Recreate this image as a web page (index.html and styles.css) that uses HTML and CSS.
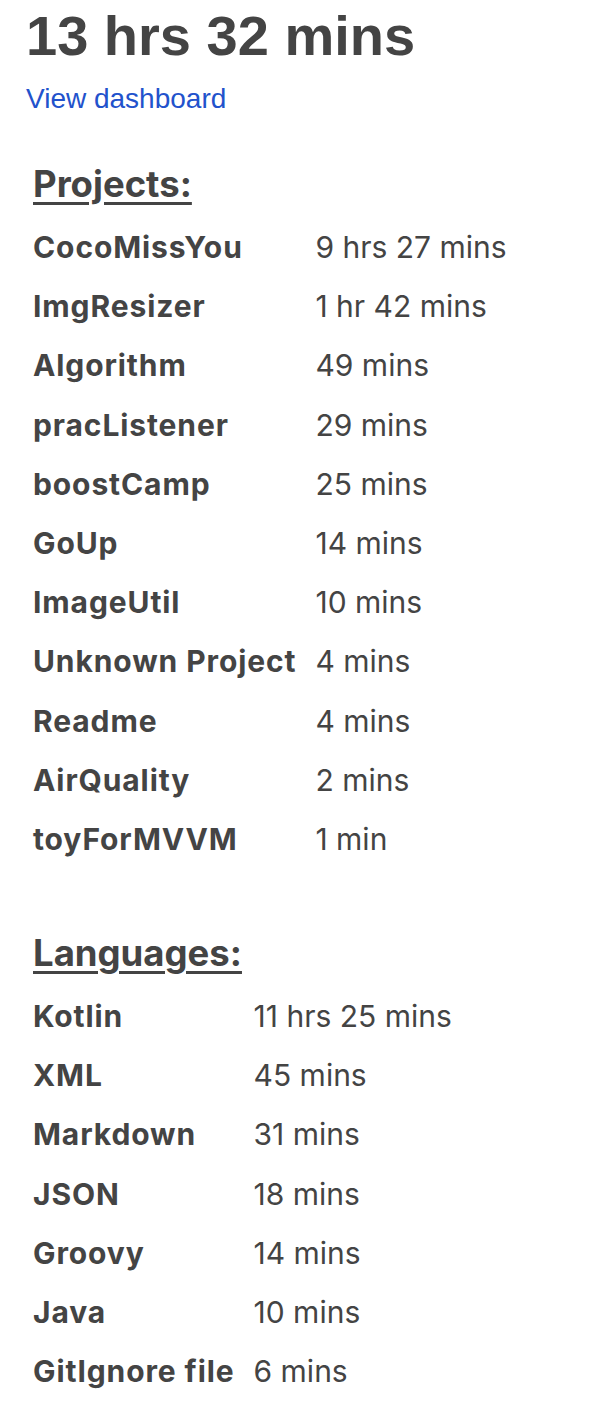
FILE: index.html
```html
<!DOCTYPE html>
<html>
<head>
<meta charset="utf-8">
<link rel="stylesheet" href="styles.css">
</head>
<body>
<div class="page">
  <h1 class="total">13 hrs 32 mins</h1>
  <a class="dash" href="#">View dashboard</a>

  <section class="block projects">
    <h2 class="block-title">Projects:</h2>
    <div class="grid">
      <div class="name">CocoMissYou</div><div class="time">9 hrs 27 mins</div>
      <div class="name">ImgResizer</div><div class="time">1 hr 42 mins</div>
      <div class="name">Algorithm</div><div class="time">49 mins</div>
      <div class="name">pracListener</div><div class="time">29 mins</div>
      <div class="name">boostCamp</div><div class="time">25 mins</div>
      <div class="name">GoUp</div><div class="time">14 mins</div>
      <div class="name">ImageUtil</div><div class="time">10 mins</div>
      <div class="name">Unknown Project</div><div class="time">4 mins</div>
      <div class="name">Readme</div><div class="time">4 mins</div>
      <div class="name">AirQuality</div><div class="time">2 mins</div>
      <div class="name">toyForMVVM</div><div class="time">1 min</div>
    </div>
  </section>

  <section class="block languages">
    <h2 class="block-title">Languages:</h2>
    <div class="grid">
      <div class="name">Kotlin</div><div class="time">11 hrs 25 mins</div>
      <div class="name">XML</div><div class="time">45 mins</div>
      <div class="name">Markdown</div><div class="time">31 mins</div>
      <div class="name">JSON</div><div class="time">18 mins</div>
      <div class="name">Groovy</div><div class="time">14 mins</div>
      <div class="name">Java</div><div class="time">10 mins</div>
      <div class="name">GitIgnore file</div><div class="time">6 mins</div>
    </div>
  </section>
</div>
</body>
</html>
```
FILE: styles.css
```css
html, body {
  margin: 0;
  padding: 0;
  background: #ffffff;
}
.page {
  padding: 4px 0 0 26px;
  color: #444444;
}
.total {
  margin: 0;
  font-family: "Liberation Sans", Arial, sans-serif;
  font-weight: bold;
  font-size: 56px;
  line-height: 64px;
  color: #444444;
}
.dash {
  display: inline-block;
  margin-top: 15px;
  font-family: "Liberation Sans", Arial, sans-serif;
  font-size: 28px;
  line-height: 32px;
  color: #2252cc;
  text-decoration: none;
}
.block {
  padding-left: 7px;
}
.projects {
  margin-top: 45px;
}
.languages {
  margin-top: 60px;
}
.block-title {
  margin: 0 0 10px 0;
  font-family: Inter, Roboto, sans-serif;
  font-weight: bold;
  font-size: 36.5px;
  line-height: 48px;
  text-decoration: underline;
  text-underline-offset: 5px;
  text-decoration-thickness: 3px;
  color: #444444;
}
.grid {
  display: grid;
  grid-template-columns: max-content max-content;
  column-gap: 19px;
  grid-auto-rows: 59.2px;
  font-family: Inter, Roboto, sans-serif;
  font-size: 30px;
  line-height: 59.2px;
  color: #444444;
}
.name {
  font-weight: bold;
  letter-spacing: 0.9px;
}
.time {
  font-weight: normal;
}
```
